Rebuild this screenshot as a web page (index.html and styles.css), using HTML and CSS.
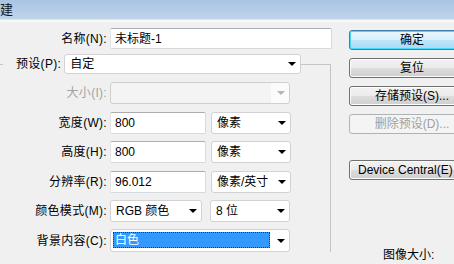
FILE: index.html
```html
<!DOCTYPE html>
<html lang="zh-CN">
<head>
<meta charset="utf-8">
<title>新建</title>
<link rel="stylesheet" href="styles.css">
</head>
<body>
<div class="titlebar"><span class="title-text">建</span></div>
<div class="dialog">
  <div class="main">
    <div class="name-row">
      <span class="lbl">名称(N):</span>
      <div class="textbox name">未标题-1</div>
    </div>
    <fieldset class="group">
      <legend class="legend">
        <span class="lbl">预设(P):</span>
        <div class="select preset"><span class="val">自定</span><span class="arrow"></span></div>
      </legend>
      <div class="grid">
        <span class="lbl disabled">大小(I):</span>
        <div class="cell"><div class="select size disabled-sel"><span class="val"></span><span class="arrow grey"></span></div></div>

        <span class="lbl">宽度(W):</span>
        <div class="cell"><div class="textbox num">800</div><div class="select unit"><span class="val">像素</span><span class="arrow"></span></div></div>

        <span class="lbl">高度(H):</span>
        <div class="cell"><div class="textbox num">800</div><div class="select unit"><span class="val">像素</span><span class="arrow"></span></div></div>

        <span class="lbl">分辨率(R):</span>
        <div class="cell"><div class="textbox num">96.012</div><div class="select unit"><span class="val">像素/英寸</span><span class="arrow"></span></div></div>

        <span class="lbl">颜色模式(M):</span>
        <div class="cell"><div class="select mode"><span class="val">RGB 颜色</span><span class="arrow"></span></div><div class="select unit"><span class="val">8 位</span><span class="arrow"></span></div></div>

        <span class="lbl">背景内容(C):</span>
        <div class="cell"><div class="select size focus"><span class="val hl">白色</span><span class="arrow"></span></div></div>
      </div>
    </fieldset>
  </div>
  <div class="buttons">
    <button class="btn default">确定</button>
    <button class="btn">复位</button>
    <button class="btn">存储预设(S)...</button>
    <button class="btn off">删除预设(D)...</button>
    <button class="btn dc">Device Central(E)</button>
    <div class="imgsize">图像大小:</div>
  </div>
</div>
</body>
</html>
```

FILE: styles.css
```css
* { box-sizing: border-box; }
html, body {
  margin: 0;
  padding: 0;
  width: 454px;
  height: 264px;
  overflow: hidden;
  background: #f0f0f0;
  font-family: "Liberation Sans", "Noto Sans CJK SC", sans-serif;
  font-size: 12px;
  color: #000;
}
.titlebar {
  height: 20px;
  background: linear-gradient(#a9c4e2, #bfd4eb);
  border-bottom: 1px solid #d8e4f1;
  display: flex;
  align-items: center;
}
.title-text {
  font-size: 13px;
  line-height: 16px;
  color: #101828;
}
.dialog {
  display: flex;
  background: linear-gradient(#fafafa, #f0f0f0 3px);
  padding-top: 8px;
}
.main {
  width: 340px;
  flex: none;
}
.name-row {
  display: flex;
  align-items: center;
  height: 21px;
}
.name-row .lbl {
  width: 107px;
}
.lbl {
  text-align: right;
  white-space: nowrap;
  line-height: 16px;
  letter-spacing: 0.3px;
}
.lbl.disabled { color: #a3a3a3; }
.textbox {
  height: 21px;
  background: #fff;
  border: 1px solid #d6d9de;
  border-top-color: #abadb3;
  border-left-color: #dfe1e5;
  border-radius: 2px;
  padding-left: 4px;
  display: flex;
  align-items: center;
  line-height: 16px;
  white-space: nowrap;
}
.textbox.name {
  margin-left: 3px;
  width: 222px;
}
.textbox.num {
  width: 96px;
  height: 22px;
}
.group {
  margin: 5px 0 0 0;
  padding: 0;
  width: 331px;
  border: 1px solid #c5c5c5;
  border-left: none;
  border-bottom: none;
  min-width: 0;
}
.legend {
  display: flex;
  align-items: center;
  padding: 0 0 0 13px;
  margin-left: 3px;
}
.legend .lbl {
  margin-right: 3px;
}
.select {
  height: 22px;
  background: #fff;
  border: 1px solid #d2d2d2;
  border-radius: 3px;
  display: flex;
  align-items: center;
  white-space: nowrap;
}
.select .val {
  flex: 1;
  padding-left: 5px;
  line-height: 16px;
}
.select .arrow {
  width: 17px;
  height: 100%;
  flex: none;
  display: flex;
  align-items: center;
  justify-content: center;
}
.select .arrow::before {
  content: "";
  border-left: 4px solid transparent;
  border-right: 4px solid transparent;
  border-top: 4px solid #000;
}
.select .arrow.grey::before { border-top-color: #b4b4b4; }
.preset {
  width: 237px;
  height: 20px;
}
.grid {
  display: grid;
  grid-template-columns: 107px 1fr;
  column-gap: 3px;
  row-gap: 7.6px;
  grid-auto-rows: 22px;
  align-items: center;
  padding-top: 8px;
}
.cell {
  display: flex;
  gap: 5px;
  align-items: center;
}
.unit { width: 80px; }
.mode { width: 92px; margin-right: 3px; }
.size { width: 180px; }
.disabled-sel {
  background: linear-gradient(to right, #f4f4f4 calc(100% - 18px), #fbfbfb calc(100% - 18px));
  border-color: #cfcfcf;
}
.focus { height: 23px; }
.focus .val.hl {
  margin: 2px 2px 3px 2px;
  align-self: stretch;
  padding-left: 2px;
  background: #3399ff;
  color: #fff;
  outline: 1px dotted #1a3d66;
  outline-offset: -1px;
  display: flex;
  align-items: center;
}
.buttons {
  margin-left: 9px;
  padding-top: 2px;
  display: flex;
  flex-direction: column;
  gap: 8px;
  flex: none;
  width: 126px;
}
.btn {
  width: 126px;
  height: 20px;
  padding: 0;
  margin: 0;
  font: inherit;
  font-size: 12px;
  line-height: 14px;
  color: #000;
  border: 1px solid #707070;
  border-radius: 3px;
  background: linear-gradient(#f2f2f2, #ebebeb 50%, #dddddd 50%, #cfcfcf);
  box-shadow: inset 0 0 0 1px #fcfcfc;
  text-align: center;
}
.btn.default {
  border-color: #3c7fb1;
  box-shadow: inset 0 0 0 1px #48d8fb;
  background: linear-gradient(#eaf6fd, #d9f0fc 50%, #bee6fd 50%, #a7d9f5);
}
.btn.off {
  color: #a0a0a0;
  border-color: #adb2b5;
  background: #f4f4f4;
  box-shadow: none;
}
.btn.dc {
  margin-top: 18px;
  text-align: left;
  padding-left: 8px;
}
.imgsize {
  margin-top: 59px;
  padding-left: 34px;
  line-height: 16px;
}
```
